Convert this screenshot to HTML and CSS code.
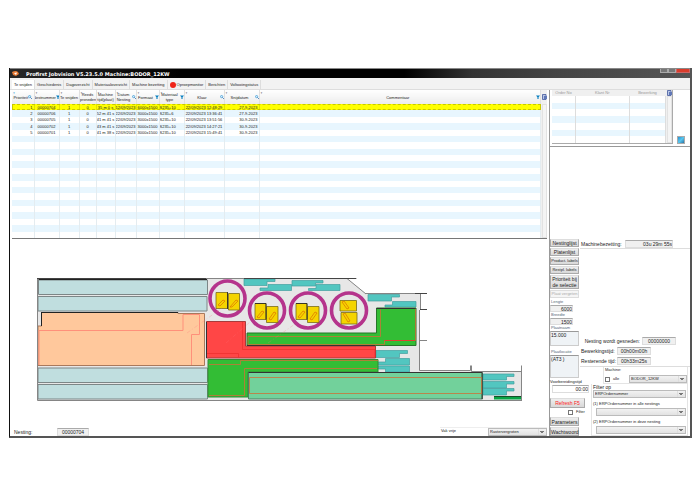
FILE: index.html
```html
<!DOCTYPE html>
<html lang="nl">
<head>
<meta charset="utf-8">
<title>Profirst Jobvision</title>
<link rel="stylesheet" href="styles.css">
</head>
<body>
<svg width="0" height="0" class="defs" aria-hidden="true">
  <symbol id="funnel" viewBox="0 0 5 5"><path d="M0 0.5H5L3.2 2.8V5H1.8V2.8Z" fill="#087fc0"/></symbol>
  <symbol id="lens" viewBox="0 0 5 5"><circle cx="2" cy="2" r="1.4" fill="#d5eefc" stroke="#3c9ad6" stroke-width=".9"/><path d="M3 3L5 5" stroke="#3474b4"/></symbol>
  <symbol id="sheet" viewBox="0 0 5 6"><path d="M.5.5H4V5.5H.5Z" fill="#b9c6e6" stroke="#42589c" stroke-width=".8"/><path d="M2 2H5V5H2Z" fill="#6078b8"/></symbol>
</svg>
<div class="window">
  <header class="titlebar">
    <svg class="logo" viewBox="0 0 7 7"><path d="M0 2Q4 0 6 2L7 4L4 6L1 5Z" fill="#e87b35"/><path d="M2 3L5 2.5L4 5Z" fill="#fff"/></svg>
    <h1>Profirst Jobvision V5.23.5.0 Machine:BODOR_12KW</h1>
    <div class="controls"><button aria-label="Minimaliseren"></button><button aria-label="Maximaliseren"></button><button class="close" aria-label="Sluiten"></button></div>
  </header>
  <nav class="tabs">
    <button class="active">Te snijden</button><button>Geschiedenis</button><button>Dagoverzicht</button><button>Materiaaloverzicht</button><button>Machine bezetting</button><button><i class="dot"></i>Oproepmonitor</button><button>Berichten</button><button>Voltooiingstatus</button>
  </nav>
  <main class="main">
    <section class="left">
      <div class="grid-pane">
        <table class="jobs">
          <colgroup><col class="w22"><col class="w25"><col class="w20"><col class="w17"><col class="w19"><col class="w21"><col class="w23"><col class="w25"><col class="w40"><col class="w35"><col></colgroup>
          <thead><tr>
            <th><div>Prioriteit<svg><use href="#lens"/></svg></div></th>
            <th><div>Nestnummer<svg><use href="#funnel"/></svg></div></th>
            <th><div>Te snijden</div></th>
            <th><div>Reeds<br>gesneden</div></th>
            <th><div>Machine<br>tijd(plaat)</div></th>
            <th><div><span>Datum<br>Nesting</span><svg><use href="#lens"/></svg></div></th>
            <th><div><span>Formaat</span><svg><use href="#funnel"/></svg></div></th>
            <th><div><span>Materiaal<br>type</span><svg><use href="#funnel"/></svg></div></th>
            <th><div><span>Klaar</span><svg><use href="#lens"/></svg></div></th>
            <th><div><span>Snijdatum</span><svg><use href="#lens"/></svg></div></th>
            <th><div><span>Commentaar</span><svg><use href="#funnel"/></svg></div></th>
          </tr></thead>
          <tbody id="jobs"></tbody>
        </table>
        <div class="scroll"><svg><use href="#sheet"/></svg><span></span></div>
      </div>
      <div class="drawing">
        <svg class="plate" viewBox="36 277 490 126" role="img" aria-label="Nesting">
          <path d="M37 278H347L366 294H420V371H522V400H37Z" fill="#e7e7e7"/>
          <g fill="#c0dedf" stroke="#7c8687">
            <path d="M38.500 280H207.500V294.500H38.500ZM38 296.500H207V311H38ZM38 368H207.500V382.500H38ZM38 384.500H207.500V399H38Z"/>
          </g>
          <path d="M41.500 312.500H178V313.500H204.500V365.500H38V326H41.500Z" fill="#ffc89c" stroke="#a9795c"/>
          <path d="M41.500 312.500V326M38.500 279.500H207M41 312.500H178" fill="none" stroke="#222"/>
          <path d="M38.500 330.500H183V314.500H199.500V334.500H191.500V365M39 331V365" fill="none" stroke="#ff907a"/>
          <g fill="#52c6c0" stroke="#449f9f" stroke-width=".7">
            <path d="M244 279H275V281.500H267V285.500H244ZM268 284.500H291.500V290.500H260V288H268ZM292 280.500H323V283H315.500V286H292ZM316 284.500H340V290.500H308.500V288.500H316Z"/>
            <path d="M368 294.500H399.500V297H391.500V301H368ZM392.500 301.500H416V307H385V305H392.500ZM376 350.500H407.500V353.500H399.500V357.500H376ZM385.500 358.500H409.500V365H378V362H385.500ZM378 366H409.500V372H385.500V369H378Z"/>
            <path d="M483 374H514V376.500H506.500V380H483ZM483 381.500H514V384H506.500V388H483ZM483 388.500H514V391H506.500V395H483Z"/>
          </g>
          <path d="M247 333H376.500V308H416V345.500H247Z" fill="#33bd35" stroke="#28752b"/>
          <path d="M208 359.500H378V372H248V397H208Z" fill="#33bd35" stroke="#348b36"/>
          <path d="M206.500 321.500H245.500V346H375.500V358H206.500Z" fill="#ff4646" stroke="#a73b3b"/>
          <path d="M248.500 372.500H482.500V399H248.500Z" fill="#72d19b" stroke="#4b8065"/>
          <path d="M376.500 308.500H415.500M247 345.500H375M248.500 372.500H482V399M206.500 322V358" fill="none" stroke="#333"/>
          <g fill="none" stroke="#cb7138" stroke-width=".8">
            <path d="M415.500 309V340.500H384.500V344.500H248V336.500H380.500V309.500M209 364.500H240.500V360.500H378M209 395.500H244.500V368.500H377M249.500 377.500H481.500V393.500H249.500Z"/>
          </g>
          <path d="M242.500 322V349.500H375V357M207 353.500H238.500V358M384.500 340.500H415" fill="none" stroke="#ef3030" stroke-width=".8"/>
          <g fill="#e7e7e7" stroke="#b5348c" stroke-width="3.600">
            <circle cx="227.500" cy="298.500" r="17.500"/><circle cx="267" cy="310.500" r="17.500"/><circle cx="308" cy="310.500" r="17.500"/><circle cx="349" cy="310.500" r="17.500"/>
          </g>
          <g fill="#f4d400" stroke="#796c1d" stroke-width=".8">
            <path d="M216 292.500H227.500V308.500H216ZM228.500 293.500H239.500V310H228.500ZM255 303.500H266V319.500H255ZM266.500 306.500H278V322.500H266.500ZM296 303.500H307V319.500H296ZM307.500 306.500H319V322.500H307.500ZM340 300.500H356.500V311H340ZM341 312.500H357V324H341Z"/>
          </g>
          <path d="M227.500 292V309M255 303.500H266V319.500M296 303.500H307V319.500" fill="none" stroke="#222" stroke-width=".8"/>
          <g fill="none" stroke="#df7900" stroke-width=".8">
            <path d="M218 305l5-5 2 1-5 5zM230 307l6-7 2 1-6 6zM257 317l5-6 2 1-5 6zM269 319l5-7 2 1-5 7zM298 317l5-6 2 1-5 6zM310 319l5-7 2 1-5 7zM342 302l2-1 5 7-2 1zM343 314l2-1 5 8-2 1z"/>
          </g>
          <g fill="none" stroke="#ff6f79" stroke-width=".5" stroke-dasharray="4 2 1 2" opacity=".5"><path d="M187 333L222 308M226 343L250 322M268 343L295 324"/></g>
          <path d="M494 396.500H521.500V399.500H494Z" fill="#08a444"/><path d="M494 396.500H521" stroke="#174e29"/>
          <path d="M37.500 278V400.500H522M37 278.500H356.500M347 278.500L366 294M365 293.500H427M420.500 294V309.500M419.500 310V370.500H470.500V365.500M419 340.500H427M471.500 365.500V371.500H521.500M521.500 365.500V400" fill="none" stroke="#858585"/>
          <path d="M37 278.500H206M244 278.500H356M415 293.500H427M420 309.500H427" stroke="#444"/>
        </svg>
      </div>
      <footer class="status">
        <label for="nest">Nesting:</label><input id="nest" class="field nest" value="00000704" readonly>
        <div class="mode"><label for="mode">Vak vrije</label><select id="mode"><option>Rastervergroten</option></select></div>
      </footer>
    </section>
    <aside class="right">
      <div class="orders-pane">
        <div class="orders-box">
          <table class="orders"><colgroup><col class="w23"><col><col class="w36"></colgroup>
            <thead><tr><th>Order No</th><th>Klant Nr</th><th>Bewerking</th></tr></thead><tbody id="orders"></tbody></table>
          <div class="scroll small"><svg><use href="#sheet"/></svg><span></span></div>
        </div>
        <button class="save" aria-label="Opslaan"></button>
      </div>
      <div class="tools">
        <div class="side">
          <button>Nestinglijst</button><button>Platenlijst</button><button class="tight">Product. labels</button><button class="tight">Restpl. labels</button>
          <button class="two">Prioriteit bij<br>de selectie</button><button class="tight" disabled>Plaat vergeten</button>
          <label for="len">Lengte</label><input id="len" class="field" value="6000">
          <label for="wid">Breedte</label><input id="wid" class="field" value="1500">
          <label for="pn">Plaatnaam</label><textarea id="pn" class="pn">15.000</textarea>
          <label for="pl" class="loc">Plaatlocatie</label><textarea id="pl" class="pl">(AT3 )</textarea>
        </div>
        <div class="info">
          <div class="line first"><label for="occ">Machinebezetting:</label><input id="occ" class="field occ" value="03u 29m 55s"></div>
          <div class="line cut"><label for="cur">Nesting wordt gesneden:</label><input id="cur" class="field" value="00000000"></div>
          <div class="line time"><label for="bt">Bewerkingstijd:</label><input id="bt" class="field" value="00h00m00h"></div>
          <div class="line time"><label for="rt">Resterende tijd:</label><input id="rt" class="field" value="00h33m25s"></div>
        </div>
        <div class="side-end">
          <label for="prep">Voorbereidingstijd</label><input id="prep" class="prep" value="00:00">
          <button class="refresh">Refresh F5</button>
          <label class="check"><input type="checkbox">Filter</label>
          <button>Parameters</button><button>Wachtwoord</button>
        </div>
        <div class="filters">
          <div class="machine"><span>Machine:</span>
            <div><label class="check"><input type="checkbox">alle</label><select aria-label="Machine"><option>BODOR_12KW</option></select></div></div>
          <div class="filter">
            <label for="f0">Filter op</label><select id="f0"><option>ERPOrdernummer</option></select>
            <label for="f1" class="sub">(1) ERPOrdernummer in alle nestings</label><select id="f1" class="in"><option></option></select>
            <label for="f2" class="sub">(2) ERPOrdernummer in deze nesting</label><select id="f2" class="in"><option></option></select>
          </div>
        </div>
      </div>
    </aside>
  </main>
</div>
<script src="script.js"></script>
</body>
</html>
```
FILE: styles.css
```css
* { box-sizing: border-box; }
body { margin: 0; padding: 68px 8px 0 9px; background: #fff; color: #222; font: 4px/6px "Liberation Sans", Arial, sans-serif; }
button, input, select, textarea { font: inherit; color: inherit; margin: 0; padding: 0; border-radius: 0; }
.defs { position: absolute; }
.window { border: solid #555; border-width: 0 2px 2px 1px; border-left-color: #111; background: #fff; }
.titlebar { display: flex; align-items: center; gap: 7px; height: 10px; padding-left: 2px; background: linear-gradient(90deg, #282828, #000 25%, #000 58%, #333 68%, #444 80%, #555); border-top: 1px solid #888; }
.logo { width: 7px; height: 7px; }
h1 { margin: 0; flex: 1; color: #fff; font: bold 5px/8px "DejaVu Sans", sans-serif; }
.controls { display: flex; align-self: flex-start; }
.controls button { width: 8px; height: 4px; border: 1px solid #aaa; border-top: 0; background: #777; }
.controls .close { width: 14px; background: #d93c2b; border-color: #c66; }
.tabs { display: flex; height: 12px; padding: 2px 2px 0; background: #f2f2f2; border-bottom: 1px solid #ddd; }
.tabs button { display: flex; align-items: center; gap: 1px; padding: 0 2px; height: 9px; border: 0; border-right: 1px solid #ddd; background: #f2f2f2; }
.tabs .active { background: #fff; }
.dot { width: 6px; height: 6px; border-radius: 50%; background: #ef2418; }
.main { display: grid; grid-template-columns: minmax(0, 1fr) 140px; }
.left { display: flex; flex-direction: column; border-right: 1px solid #999; }
.grid-pane { display: flex; height: 149px; margin: 0 2px; border-bottom: 1px solid #777; }
table { border-collapse: collapse; table-layout: fixed; }
th, td { padding: 0; font-weight: normal; white-space: nowrap; overflow: hidden; }
.jobs { flex: 1; min-width: 0; width: 100%; height: 148px; }
.jobs th { position: relative; height: 14px; background: linear-gradient(#fff, #ececec); border-right: 1px solid #e0e0e0; line-height: 5px; }
.jobs th::before { content: "т"; position: absolute; left: 1px; top: 0; color: #666; }
.jobs th:first-child::before { color: #1595d5; }
.jobs th div { display: flex; align-items: center; justify-content: center; height: 14px; }
.jobs th span { flex: 1; }
.jobs th svg { flex: none; width: 4px; height: 4px; }
.jobs td { height: 6px; border-right: 1px solid #e4ecf0; text-align: center; line-height: 5px; }
.jobs td:first-child { text-align: right; padding-right: 1px; }
.jobs td:nth-child(8) { text-align: left; }
.jobs td:nth-child(10) { text-align: right; padding-right: 1px; }
tbody tr:nth-child(even) { background: #e8f6fe; }
.jobs tbody tr:first-child { background: #ff0; outline: 1px dashed #c8c800; outline-offset: -1px; }
.jobs tbody tr:first-child td { border-color: #e2e200; }
.w17 { width: 17px; } .w19 { width: 19px; } .w20 { width: 20px; } .w21 { width: 21px; } .w22 { width: 22px; } .w23 { width: 23px; } .w25 { width: 25px; } .w35 { width: 35px; } .w36 { width: 36px; } .w40 { width: 40px; }
.scroll { display: flex; flex-direction: column; align-items: center; flex: none; width: 6px; background: #f0f0f0; }
.scroll svg { width: 5px; height: 6px; margin: 4px 0; }
.scroll span { flex: 1; width: 5px; border: 1px solid #e2e2e2; background: #f4f4f4; }
.scroll.small svg { margin: 0; }
.drawing { flex: 1; padding: 38px 0 24px 26px; }
.plate { display: block; width: 490px; max-width: 100%; }
.status { display: flex; align-items: center; height: 9px; padding: 0 2px 0 4px; }
.status > label { width: 43px; font-size: 5px; }
.field { height: 8px; border: 1px solid #ddd; border-top-color: #aaa; background: #f0f0f0; text-align: center; font-size: 5px; line-height: 6px; }
.nest { width: 32px; }
.mode { display: flex; justify-content: space-between; width: 107px; margin-left: auto; padding-left: 1px; border-top: 1px solid #eee; }
select { appearance: none; display: block; height: 8px; border: 1px solid #bbb; padding: 0 1px; line-height: 6px; background: conic-gradient(from 315deg at 50% 70%, #777 90deg, transparent 0) right 2px center / 4px 3px no-repeat, linear-gradient(#ddd, #ddd) right 7px top / 1px 8px no-repeat, linear-gradient(#f2f2f2, #e2e2e2); }
.mode select { width: 59px; }
.right { display: flex; flex-direction: column; min-width: 0; }
.orders-pane { display: flex; justify-content: space-between; height: 57px; padding-right: 5px; padding-left: 2px; border-bottom: 1px solid #999; }
.orders-box { display: flex; width: 121px; height: 54px; border: solid #aaa; border-width: 0 1px 1px 0; }
.orders { flex: 1; width: 100%; height: 53px; }
.orders th { height: 6px; background: #f0f0f0; color: #999; line-height: 6px; }
.orders td { height: 6px; border-right: 1px solid #ddd; }
.save { align-self: flex-end; width: 8px; height: 8px; margin-bottom: 2px; border: 1px solid #aaa; background: linear-gradient(135deg, #2690d0, #5ac6ee 50%, #2774a6); }
.tools { flex: 1; display: grid; grid-template-columns: 30px 11px minmax(0, 1fr); grid-template-rows: 128px 12px auto; padding-top: 92px; }
.side { grid-area: 1 / 1 / 3 / 2; display: flex; flex-direction: column; }
.side button, .side-end button { width: 29px; height: 8px; margin-bottom: 1px; border: 1px solid #aaa; border-top-color: #ddd; background: linear-gradient(#eee, #d8d8d8); font-size: 5px; line-height: 6px; white-space: nowrap; }
.side .two { height: 14px; }
.side .tight { font-size: 4px; }
.side button:disabled { color: #aaa; background: #f5f5f5; border-color: #ddd; }
.side label { padding-left: 1px; color: #567; }
.side .field { width: 23px; height: 7px; text-align: right; }
.side textarea { width: 29px; resize: none; overflow: hidden; border: 1px solid #ccc; border-top-color: #999; background: #eff3f6; font-size: 5px; }
.side .pn { height: 15px; }
.side .loc { margin-top: 3px; }
.side .pl { height: 23px; }
.info { grid-area: 1 / 2 / 2 / 4; display: flex; flex-direction: column; border-bottom: 1px solid #ddd; }
.line { display: flex; align-items: center; gap: 2px; height: 10px; padding-left: 1px; font-size: 5px; }
.line.first { border-bottom: 1px solid #ddd; }
.occ { width: 48px; margin: 0 17px 0 auto; text-align: right; }
.line.cut { margin-top: auto; padding-right: 14px; justify-content: flex-end; }
.line.cut .field { width: 34px; }
.time label { width: 34px; white-space: nowrap; }
.time .field { width: 34px; }
.side-end { grid-area: 3 / 1 / 4 / 3; display: flex; flex-direction: column; align-items: flex-start; white-space: nowrap; }
.prep { width: 37px; height: 8px; margin: 0 0 5px 2px; border: 1px solid #ddd; border-top-color: #aaa; text-align: right; font-size: 5px; }
.side-end .refresh { width: 35px; height: 10px; color: #f22; }
.side-end button { height: 9px; }
.side-end .check { margin: 0 0 2px 18px; }
.side-end button:last-child { margin-bottom: 0; }
.check { display: flex; align-items: center; gap: 3px; }
input[type="checkbox"] { appearance: none; width: 5px; height: 5px; border: 1px solid #777; background: #fff; }
.filters { grid-area: 2 / 3 / 4 / 4; padding-right: 2px; }
.machine { margin-left: 12px; padding-left: 1px; border: 1px solid #e4e4e4; border-top: 0; height: 17px; }
.machine > div { display: flex; justify-content: space-between; margin-top: 2px; }
.machine select { width: 58px; }
.filter { display: flex; flex-direction: column; padding: 0 1px 1px 1px; border: 1px solid #e4e4e4; border-top: 0; }
.filter label { font-size: 5px; }
.filter .sub { margin-top: 3px; font-size: 4px; white-space: nowrap; }
.filter .in { margin: 1px 0 0 3px; }
```
FILE: script.js
```
const jobs = [
  ["1", "00000704", "1", "0", "35 m 0 s", "12/09/2023", "6000x1500", "S235+10", "22/09/2023 12:48:29", "27-9-2023"],
  ["2", "00000706", "1", "0", "52 m 41 s", "22/09/2023", "3000x1500", "S235+6", "22/09/2023 13:36:41", "27-9-2023"],
  ["3", "00000705", "1", "0", "41 m 41 s", "22/09/2023", "3000x1500", "S235+10", "22/09/2023 13:51:56", "30-9-2023"],
  ["4", "00000702", "1", "0", "43 m 41 s", "22/09/2023", "3000x1500", "S235+10", "22/09/2023 14:27:21", "30-9-2023"],
  ["5", "00000701", "1", "0", "41 m 38 s", "22/09/2023", "3000x1500", "S235+10", "22/09/2023 15:49:41", "30-9-2023"]
];

function fill(id, rows, columns, data) {
  const body = document.getElementById(id);
  for (let r = 0; r < rows; r++) {
    const tr = body.insertRow();
    for (let c = 0; c < columns; c++) tr.insertCell().textContent = (data[r] || [])[c] || "";
  }
}

fill("jobs", 21, 11, jobs);
fill("orders", 7, 3, []);
```
